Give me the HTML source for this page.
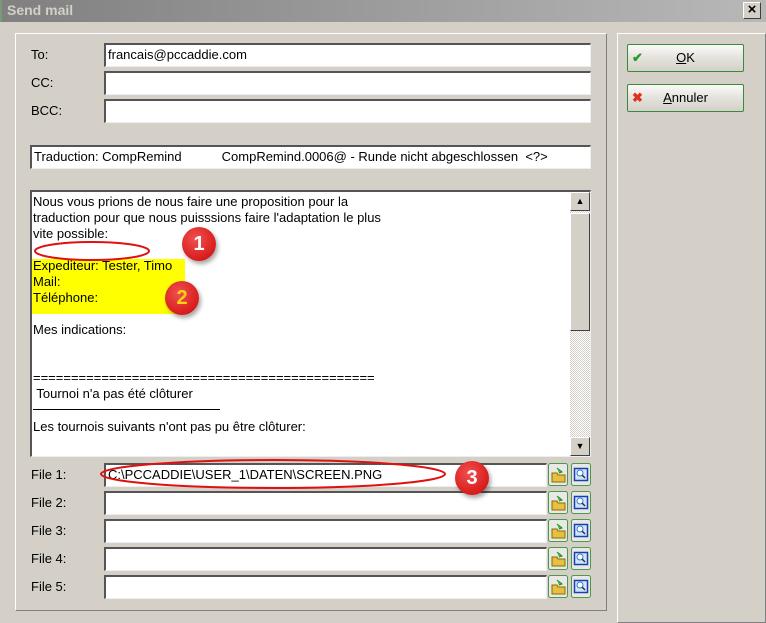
<!DOCTYPE html>
<html><head><style>
*{margin:0;padding:0;box-sizing:border-box}
body{width:766px;height:620px;background:#d4d0c8;font-family:"Liberation Sans",sans-serif;font-size:13px;position:relative;overflow:hidden;color:#000}
.abs{position:absolute}
.field{position:absolute;background:#fff;border-top:2px solid #555;border-left:2px solid #555;border-right:1px solid #eee;border-bottom:1px solid #eee;padding:1px 2px;line-height:18px;white-space:nowrap}
.lbl{position:absolute;left:31px}
.btn{position:absolute;left:627px;width:117px;height:28px;border:1px solid #3a8a3a;border-radius:2px;background:linear-gradient(#fbfbfa,#e4e2dc 50%,#d4d1ca);text-align:center;line-height:26px}
.badge{position:absolute;width:34px;height:34px;border-radius:50%;background:radial-gradient(circle at 40% 35%,#f05050,#d81c1c 70%,#b51212);color:#fff;font-weight:bold;font-size:20px;text-align:center;line-height:34px;box-shadow:2px 3px 4px rgba(0,0,0,.35)}
</style></head><body>
<div class="abs" style="left:0;top:0;width:766px;height:22px;background:linear-gradient(90deg,#808080,#b8b8b8);"></div>
<div class="abs" style="left:0;top:0;width:2px;height:22px;background:#7a9a7a"></div>
<div class="abs" style="left:7px;top:2px;color:#d4d0c8;font-weight:bold;font-size:14px">Send mail</div>
<div class="abs" style="left:743px;top:2px;width:18px;height:17px;background:#d4d0c8;border:1px solid;border-color:#fff #404040 #404040 #fff;text-align:center;font-weight:bold;line-height:14px;font-size:15px">×</div>

<div class="abs" style="left:15px;top:33px;width:592px;height:578px;border:1px solid;border-color:#fff #808080 #808080 #fff"></div>
<div class="abs" style="left:617px;top:33px;width:149px;height:590px;border:1px solid;border-color:#fff #808080 #808080 #fff"></div>

<div class="lbl" style="top:47px">To:</div>
<div class="field" style="left:104px;top:43px;width:487px;height:24px">francais@pccaddie.com</div>
<div class="lbl" style="top:75px">CC:</div>
<div class="field" style="left:104px;top:71px;width:487px;height:24px"></div>
<div class="lbl" style="top:103px">BCC:</div>
<div class="field" style="left:104px;top:99px;width:487px;height:24px"></div>

<div class="field" style="left:30px;top:145px;width:561px;height:24px">Traduction: CompRemind<span style="display:inline-block;width:40px"></span>CompRemind.0006@ - Runde nicht abgeschlossen&nbsp; &lt;?&gt;</div>

<div class="field" style="left:30px;top:190px;width:561px;height:267px;padding:0"></div>
<div class="abs" style="left:32px;top:259px;width:153px;height:55px;background:#ffff00"></div>
<div class="abs" style="left:33px;top:194px;line-height:16px;white-space:pre">Nous vous prions de nous faire une proposition pour la
traduction pour que nous puisssions faire l'adaptation le plus
vite possible:

Expediteur: Tester, Timo
Mail:
Téléphone:

Mes indications:


=============================================
 Tournoi n'a pas été clôturer
</div>
<div class="abs" style="left:33px;top:409px;width:187px;height:1px;background:#000"></div>
<div class="abs" style="left:33px;top:419px">Les tournois suivants n'ont pas pu être clôturer:</div>
<!-- scrollbar -->
<div class="abs" style="left:570px;top:192px;width:20px;height:263px;background:repeating-conic-gradient(#fff 0 25%,#d4d0c8 0 50%) 0 0/2px 2px"></div>
<div class="abs" style="left:570px;top:192px;width:20px;height:19px;background:#d4d0c8;border:1px solid;border-color:#fff #404040 #404040 #fff;font-size:9px;text-align:center;line-height:17px">▲</div>
<div class="abs" style="left:570px;top:213px;width:20px;height:118px;background:#d4d0c8;border:1px solid;border-color:#fff #404040 #404040 #fff"></div>
<div class="abs" style="left:570px;top:437px;width:20px;height:19px;background:#d4d0c8;border:1px solid;border-color:#fff #404040 #404040 #fff;font-size:9px;text-align:center;line-height:17px">▼</div>

<!-- files -->
<div class="lbl" style="top:467px">File 1:</div>
<div class="field" style="left:104px;top:463px;width:443px;height:24px">C:\PCCADDIE\USER_1\DATEN\SCREEN.PNG</div>
<div class="lbl" style="top:495px">File 2:</div>
<div class="field" style="left:104px;top:491px;width:443px;height:24px"></div>
<div class="lbl" style="top:523px">File 3:</div>
<div class="field" style="left:104px;top:519px;width:443px;height:24px"></div>
<div class="lbl" style="top:551px">File 4:</div>
<div class="field" style="left:104px;top:547px;width:443px;height:24px"></div>
<div class="lbl" style="top:579px">File 5:</div>
<div class="field" style="left:104px;top:575px;width:443px;height:24px"></div>

<svg class="abs" style="left:0;top:0" width="766" height="620">
<defs>
<g id="f"><rect x="0.5" y="0.5" width="19" height="22" rx="2" fill="#e8e8e4" stroke="#4a9a4a"/><path d="M4 10h5l1 2h7v7H4z" fill="#e8c040" stroke="#8a6a10"/><path d="M9 5l5 4-3 1" fill="#3c3" stroke="#282"/></g>
<g id="s"><rect x="0.5" y="0.5" width="19" height="22" rx="2" fill="#e8e8e4" stroke="#4a9a4a"/><rect x="3.5" y="5.5" width="13" height="12" fill="#cfe6ff" stroke="#1a3fb0" stroke-width="1.5"/><circle cx="9" cy="10" r="3" fill="#fff" stroke="#3a7ad0"/><path d="M11 12l3 3" stroke="#333" stroke-width="1.5"/></g>
</defs>
<use href="#f" x="548" y="463"/><use href="#s" x="571" y="463"/>
<use href="#f" x="548" y="491"/><use href="#s" x="571" y="491"/>
<use href="#f" x="548" y="519"/><use href="#s" x="571" y="519"/>
<use href="#f" x="548" y="547"/><use href="#s" x="571" y="547"/>
<use href="#f" x="548" y="575"/><use href="#s" x="571" y="575"/>
<ellipse cx="92" cy="251" rx="57" ry="9" fill="none" stroke="#e01010" stroke-width="2"/>
<ellipse cx="273" cy="474" rx="172" ry="14" fill="none" stroke="#e01010" stroke-width="2"/>
</svg>
<div class="badge" style="left:182px;top:227px">1</div>
<div class="badge" style="left:165px;top:281px;color:#ffd21a">2</div>
<div class="badge" style="left:455px;top:461px">3</div>

<div class="btn" style="top:44px"><span style="position:absolute;left:4px;top:0;color:#2a9a2a;font-weight:bold">✔</span><u>O</u>K</div>
<div class="btn" style="top:84px"><span style="position:absolute;left:4px;top:0;color:#e03020;font-weight:bold">✖</span><u>A</u>nnuler</div>
</body></html>
